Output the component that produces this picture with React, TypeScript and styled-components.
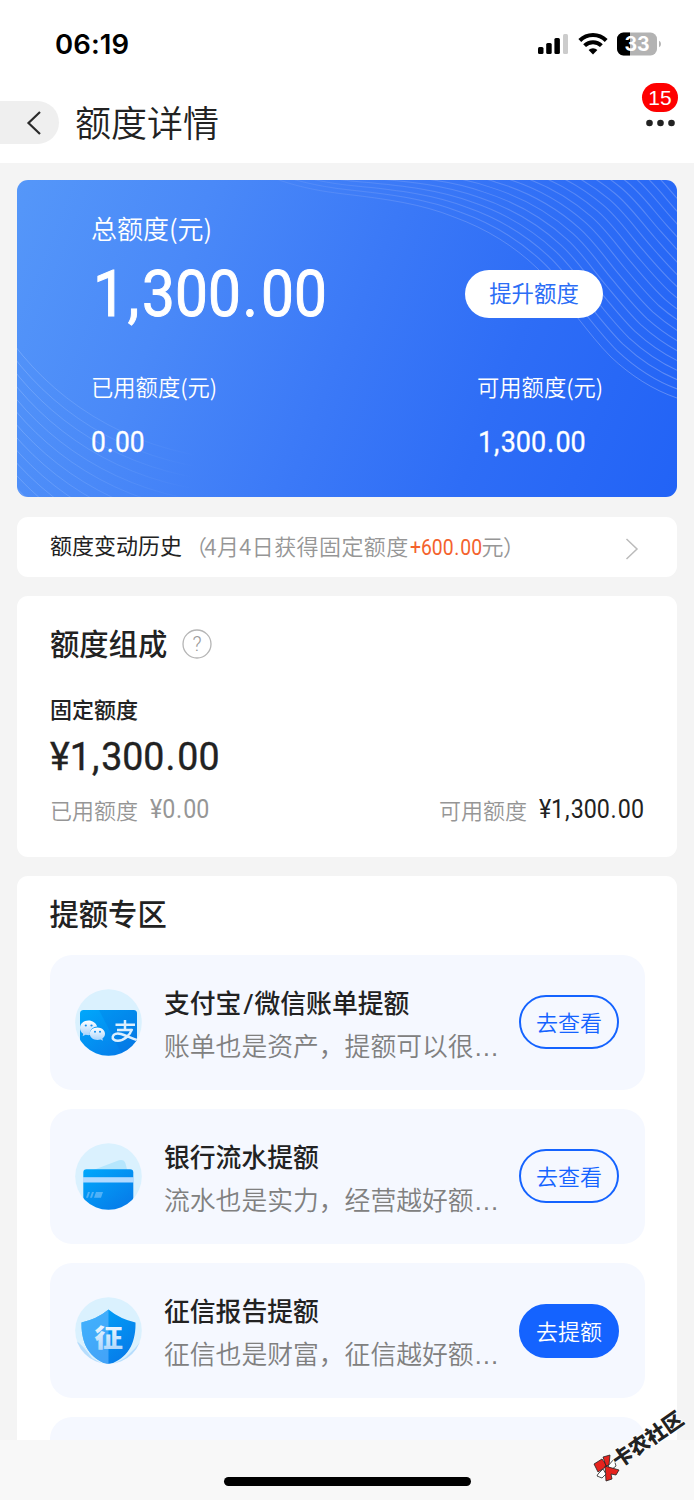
import React from 'react';
import styled, { createGlobalStyle } from 'styled-components';

const cjk = '"Noto Sans CJK SC", sans-serif';

const GlobalStyle = createGlobalStyle`
  * { box-sizing: border-box; }
  body { margin: 0; background: #f4f4f4; font-family: ${cjk}; color: #222; }
`;

const Screen = styled.div`
  width: 694px;
  height: 1500px;
  position: relative;
  display: flex;
  flex-direction: column;
  overflow: hidden;
`;

const StatusBar = styled.div`
  height: 88px;
  flex: none;
  background: #fff;
  display: flex;
  align-items: center;
  justify-content: space-between;
  padding: 0 32px 0 55px;
`;

const Clock = styled.span`
  font: 600 27.5px/40px Inter, sans-serif;
  letter-spacing: 0.1px;
  color: #000;
`;

const StatusIcons = styled.div`
  display: flex;
  align-items: center;
`;

const Header = styled.header`
  height: 75px;
  flex: none;
  background: #fff;
  display: flex;
  align-items: flex-start;
  padding: 13px 16px 0 0;
`;

const BackButton = styled.button`
  width: 59px;
  height: 43px;
  border: 0;
  padding: 0 0 0 25px;
  background: #efefef;
  border-radius: 0 22px 22px 0;
  display: flex;
  align-items: center;
`;

const PageTitle = styled.h1`
  flex: 1;
  margin: -1px 0 0 16px;
  font-size: 36px;
  line-height: 42px;
  font-weight: 350;
`;

const MenuButton = styled.div`
  width: 36px;
  margin-top: -18px;
  display: flex;
  flex-direction: column;
  align-items: center;
  gap: 6.5px;
`;

const Badge = styled.span`
  width: 36px;
  height: 29px;
  border-radius: 15px;
  background: #fe0000;
  color: #fff;
  font: 400 21px/29px "Liberation Sans", sans-serif;
  text-align: center;
`;

const Content = styled.main`
  height: 1277px;
  flex: none;
  overflow: hidden;
  padding: 17px 17px 0;
  display: flex;
  flex-direction: column;
`;

const Hero = styled.section`
  position: relative;
  height: 317px;
  flex: none;
  border-radius: 11px;
  overflow: hidden;
  background: linear-gradient(112deg, #5597f9 0%, #4a89f8 25%, #3b79f7 50%, #2e6df6 72%, #2263f6 100%);
  color: #fff;
  padding: 30px 74px 0;
`;

const HeroLines = styled.svg`
  position: absolute;
  inset: 0;
`;

const HeroBody = styled.div`
  position: relative;
`;

const HeroLabel = styled.div<{ $size: number; $line: number }>`
  font-size: ${p => p.$size}px;
  line-height: ${p => p.$line}px;
  font-weight: 350;
  white-space: nowrap;
`;

const HeroMain = styled.div`
  display: flex;
  justify-content: space-between;
  align-items: center;
  height: 76px;
  margin-top: 10px;
`;

const RaiseButton = styled.button`
  width: 138px;
  height: 48px;
  padding: 0 0 5px;
  border: 0;
  border-radius: 24px;
  background: #fff;
  color: #2b6df6;
  font: 400 22.4px/42px ${cjk};
`;

const HeroFoot = styled.div`
  display: flex;
  justify-content: space-between;
  margin-top: 38px;
`;

const HeroStat = styled.div`
  width: 126px;
  display: flex;
  flex-direction: column;
  gap: 24px;
`;

const Figure = styled.span<{ $size: number; $weight?: number; $color?: string; $scale?: number; $line?: number; $right?: boolean; $indent?: number; $bolder?: number }>`
  display: inline-block;
  margin-left: ${p => p.$indent ?? 0}px;
  font-family: Roboto, sans-serif;
  font-size: ${p => p.$size}px;
  line-height: ${p => p.$line ?? p.$size + 4}px;
  font-weight: ${p => p.$weight ?? 400};
  color: ${p => p.$color ?? 'inherit'};
  -webkit-text-stroke: ${p => p.$bolder ?? 0}px currentColor;
  transform: scaleX(${p => p.$scale ?? 0.93});
  transform-origin: ${p => (p.$right ? 'right' : 'left')} center;
  white-space: nowrap;
`;

const Punct = styled.span`
  letter-spacing: 0.05em;
  margin-left: 0.03em;
`;

const Card = styled.section<{ $height: number; $top?: number; $inset?: number }>`
  height: ${p => p.$height}px;
  flex: none;
  margin-top: 19.5px;
  background: #fff;
  border-radius: 11px;
  padding: ${p => p.$top ?? 0}px ${p => p.$inset ?? 33}px 0;
`;

const HistoryRow = styled(Card)`
  display: flex;
  align-items: center;
  padding: 0 38px 0 33px;
`;

const HistoryTitle = styled.span`
  font-size: 22px;
  line-height: 32px;
  margin-top: -6px;
`;

const HistoryNote = styled.span`
  flex: 1;
  margin-top: -4px;
  font-size: 22px;
  line-height: 32px;
  font-weight: 350;
  letter-spacing: 0.4px;
  color: #969696;
  white-space: nowrap;
`;

const Paren = styled.span<{ $shift: number }>`
  margin-left: ${p => p.$shift}px;
  margin-right: ${p => -p.$shift}px;
`;

const GainSlot = styled.span`
  margin: 0 -10px 0 1px;
  letter-spacing: 0;
`;

const ChevronRight = styled.svg`
  margin-top: 4px;
`;

const SectionTitle = styled.h2`
  display: flex;
  align-items: center;
  gap: 15px;
  margin: 0;
  font-size: 29.3px;
  line-height: 42px;
  font-weight: 500;
`;

const HelpIcon = styled.svg`
  margin-top: 3px;
`;

const FixedLabel = styled.div`
  margin-top: 29px;
  font-size: 22px;
  line-height: 32px;
  font-weight: 500;
`;

const SplitRow = styled.div`
  display: flex;
  justify-content: space-between;
  align-items: center;
  margin-top: 4px;
`;

const Pair = styled.div<{ $gap: number }>`
  display: flex;
  align-items: center;
  font-size: 22px;
  line-height: 30px;
  font-weight: 350;
  color: #969696;
  gap: ${p => p.$gap}px;
`;

const OfferList = styled.div`
  display: flex;
  flex-direction: column;
  gap: 19.3px;
  margin-top: 21.5px;
`;

const Offer = styled.article`
  height: 135px;
  border-radius: 22px;
  background: #f5f8ff;
  display: flex;
  align-items: center;
  padding: 0 25.5px 0 25.5px;
`;

const OfferText = styled.div`
  flex: 1;
  margin-left: 22px;
  padding-top: 7px;
`;

const OfferTitle = styled.div`
  font: 500 25.8px/43px Roboto, ${cjk};
  white-space: nowrap;
`;

const Slash = styled.span`
  margin: 0 1px 0 2px;
`;

const OfferNote = styled.div`
  font: 350 25.8px/43px "Liberation Sans", ${cjk};
  color: #808080;
  white-space: nowrap;
`;

const OfferButton = styled.button<{ $filled?: boolean }>`
  width: 100px;
  height: 54px;
  border-radius: 27px;
  padding: 0 0 2px;
  border: 2px solid #1463ff;
  background: ${p => (p.$filled ? '#1463ff' : 'transparent')};
  color: ${p => (p.$filled ? '#fff' : '#1463ff')};
  font: 350 22px/46px ${cjk};
`;

const BottomBar = styled.footer`
  flex: 1;
  background: #f8f8f8;
  display: flex;
  justify-content: center;
  align-items: flex-start;
  padding-top: 37px;
`;

const HomeIndicator = styled.div`
  width: 247px;
  height: 9px;
  border-radius: 5px;
  background: #000;
`;

const Watermark = styled.svg`
  position: absolute;
  right: 0;
  bottom: 0;
`;

function Money({ value }: { value: string }) {
  return (
    <>
      {value.split(/([.,])/).map((part, i) => (/[.,]/.test(part) ? <Punct key={i}>{part}</Punct> : part))}
    </>
  );
}

function SignalIcon() {
  return (
    <svg width="31" height="22" viewBox="0 0 31 22">
      <rect x="0" y="14" width="5.5" height="7" rx="1.5" />
      <rect x="8.2" y="10" width="5.5" height="11" rx="1.5" />
      <rect x="16.4" y="5" width="5.5" height="16" rx="1.5" />
      <rect x="25" y="1" width="5" height="20" rx="1.5" fill="#ccc" />
    </svg>
  );
}

function WifiIcon() {
  return (
    <svg width="30" height="22" viewBox="0 0 30 22" style={{ marginLeft: 9 }}>
      <g fill="none" stroke="#000" strokeWidth="4">
        <path d="M1.8 7.5 A18.7 18.7 0 0 1 28.2 7.5" />
        <path d="M6.6 12.6 A12 12 0 0 1 23.4 12.6" />
      </g>
      <path d="M10.6 17 A6.3 6.3 0 0 1 19.4 17 L15 21.4 Z" />
    </svg>
  );
}

function BatteryIcon() {
  return (
    <svg width="45" height="24" viewBox="0 0 45 24" style={{ marginLeft: 9 }}>
      <rect x="0" y="0.5" width="40" height="23" rx="6.5" fill="#b3b3b3" />
      <path d="M13 0.5 H6.5 A6.5 6.5 0 0 0 0 7 V17 A6.5 6.5 0 0 0 6.5 23.5 H13 Z" />
      <path d="M42 8.8 Q44 9.5 44 12 Q44 14.5 42 15.2 Z" fill="#b3b3b3" />
      <text x="20" y="19" textAnchor="middle" fontFamily="Inter" fontWeight="700" fontSize="19.5" fill="#fff">33</text>
    </svg>
  );
}

function CardLines() {
  const upper = Array.from({ length: 19 }, (_, i) => i);
  const lower = Array.from({ length: 14 }, (_, i) => i);
  return (
    <HeroLines width="660" height="317" viewBox="0 0 660 317" fill="none">
      <defs>
        <linearGradient id="upper" gradientUnits="userSpaceOnUse" x1="270" y1="0" x2="700" y2="60">
          <stop offset="0" stopColor="#a9bdf5" stopOpacity="0.15" />
          <stop offset="0.5" stopColor="#a9bdf5" stopOpacity="0.33" />
          <stop offset="1" stopColor="#a9bdf5" stopOpacity="0.45" />
        </linearGradient>
        <linearGradient id="lower" gradientUnits="userSpaceOnUse" x1="0" y1="0" x2="180" y2="0">
          <stop offset="0" stopColor="#a9c9ff" stopOpacity="0.35" />
          <stop offset="1" stopColor="#a9c9ff" stopOpacity="0" />
        </linearGradient>
      </defs>
      {upper.map(i => (
        <path
          key={i}
          d="M200 -34 C245 0 285 9 327 14 C370 19 405 24 437 37 C470 49 497 66 520 88 C535 102 547 121 560 137 C572 152 582 165 594 177 C613 195 636 210 660 218 C690 228 720 233 760 237"
          transform={`matrix(1 ${-0.0091 * i} 0 1 ${6 * i} ${-i})`}
          stroke="url(#upper)"
        />
      ))}
      {lower.map(i => (
        <path
          key={i}
          d="M-20 140 C20 205 90 262 190 277"
          transform={`translate(${-i * 1.5} ${i * 11})`}
          stroke="url(#lower)"
        />
      ))}
    </HeroLines>
  );
}

function IconDisc({ id, children }: { id: string; children: React.ReactNode }) {
  return (
    <svg width="67" height="67" viewBox="0 0 67 67">
      <defs>
        <linearGradient id={`${id}-fill`} x1="0" y1="0" x2="0.8" y2="1">
          <stop offset="0" stopColor="#00a8fb" />
          <stop offset="1" stopColor="#0779e8" />
        </linearGradient>
        <linearGradient id={`${id}-pale`} x1="0" y1="0" x2="0" y2="1">
          <stop offset="0" stopColor="#fff" />
          <stop offset="1" stopColor="#a5d2fb" />
        </linearGradient>
        <clipPath id={`${id}-clip`}><circle cx="33.5" cy="33.5" r="33.3" /></clipPath>
      </defs>
      <circle cx="33.5" cy="33.5" r="33.3" fill="#daf1fe" />
      <g clipPath={`url(#${id}-clip)`}>{children}</g>
    </svg>
  );
}

function PayIcon() {
  return (
    <IconDisc id="pay">
      <rect x="5" y="21" width="57" height="50" rx="3.5" fill="url(#pay-fill)" />
      <path d="M24 21 H58.5 Q62 21 62 24.5 V67 H48 Z" fill="#0068d8" opacity="0.2" />
      <g fill="url(#pay-pale)">
        <path d="M13.5 31.5 C8.5 31.5 5 34.7 5 39 C5 41.5 6.2 43.5 8.2 44.8 L7.6 47.2 L10.5 45.8 C12 46.2 14 46.4 15 46.1 C14 41 18 37.6 22.2 37.5 C21 34 17.5 31.5 13.5 31.5 Z" />
        <path d="M22.5 38.5 C18 38.5 14.8 41.3 14.8 44.7 C14.8 48.2 18.2 50.9 22.5 50.9 C23.6 50.9 24.6 50.7 25.5 50.4 L28 51.7 L27.4 49.5 C29 48.4 30 46.7 30 44.7 C30 41.3 26.6 38.5 22.5 38.5 Z" />
      </g>
      <g fill="#0d8df0">
        <circle cx="10.8" cy="36.5" r="1.1" /><circle cx="16.5" cy="36.5" r="1.1" />
        <circle cx="20" cy="42.8" r="1" /><circle cx="25" cy="42.8" r="1" />
      </g>
      <g fill="none" stroke="#dceffe" strokeWidth="2.5">
        <path d="M40.5 35.8 H60 M42 41 H57.5 M50 31 V41" />
        <path d="M57 40 C55 46.5 49 51.7 43 51.7 C39 51.7 37.2 49.8 37.8 47.5 C38.5 44.8 42 44 46 45 C51 46.3 56 49.5 62 51" />
      </g>
    </IconDisc>
  );
}

function BankIcon() {
  return (
    <IconDisc id="bank">
      <path d="M17 27.5 L44 17.3 Q49 16 50.5 20.5 L52.5 28 Z" fill="#b5e6fd" />
      <path d="M8.3 29.5 Q8.3 26.3 11.5 26.3 H55 Q58.3 26.3 58.3 29.5 V70 H8.3 Z" fill="url(#bank-fill)" />
      <rect x="8" y="34.2" width="51" height="5.3" fill="#b2daff" />
      <path d="M13 49 H15 L13 54.8 H11 Z M17 49 H19 L17 54.8 H15 Z M21 49 H28 L26 54.8 H19 Z" fill="#6bbcf8" opacity="0.75" />
    </IconDisc>
  );
}

function CreditIcon() {
  return (
    <IconDisc id="credit">
      <path d="M0 43 Q8 48 17 61 L33 70 L50 61 Q60 52 67 43 V67 H0 Z" fill="#a6d4fc" opacity="0.7" />
      <path d="M33.5 12.5 Q45 22 60.5 25.5 C61 47 52 62 33.5 67.5 C15 62 6 47 6.5 25.5 Q22 22 33.5 12.5 Z" fill="url(#credit-fill)" />
      <path d="M33.5 12.5 V67.5 C15 62 6 47 6.5 25.5 Q22 22 33.5 12.5 Z" fill="#6db9ff" opacity="0.6" />
      <text transform="translate(33.5 49.7) scale(1.17 1)" textAnchor="middle" fontFamily="Noto Sans CJK SC" fontWeight="900" fontSize="24.5" fill="url(#credit-pale)">征</text>
    </IconDisc>
  );
}

const offers = [
  { icon: <PayIcon />, title: <>支付宝<Slash>/</Slash>微信账单提额</>, note: '账单也是资产，提额可以很…', action: '去查看', filled: false },
  { icon: <BankIcon />, title: '银行流水提额', note: '流水也是实力，经营越好额…', action: '去查看', filled: false },
  { icon: <CreditIcon />, title: '征信报告提额', note: '征信也是财富，征信越好额…', action: '去提额', filled: true },
];

export default function App() {
  return (
    <Screen>
      <GlobalStyle />
      <StatusBar>
        <Clock>06:19</Clock>
        <StatusIcons>
          <SignalIcon />
          <WifiIcon />
          <BatteryIcon />
        </StatusIcons>
      </StatusBar>
      <Header>
        <BackButton aria-label="返回">
          <svg width="17" height="26" viewBox="0 0 17 26" fill="none" stroke="#2a2a2a" strokeWidth="2.2">
            <path d="M15 2 L3.5 13 L15 24" />
          </svg>
        </BackButton>
        <PageTitle>额度详情</PageTitle>
        <MenuButton>
          <Badge>15</Badge>
          <svg width="30" height="8" viewBox="0 0 30 8" fill="#222">
            <circle cx="4.5" cy="4" r="3.3" /><circle cx="15.5" cy="4" r="3.3" /><circle cx="26.5" cy="4" r="3.3" />
          </svg>
        </MenuButton>
      </Header>
      <Content>
        <Hero>
          <CardLines />
          <HeroBody>
            <HeroLabel $size={26} $line={36}>总额度(元)</HeroLabel>
            <HeroMain>
              <Figure $size={64.5} $scale={0.908} $indent={2} $bolder={1}><Money value="1,300.00" /></Figure>
              <RaiseButton>提升额度</RaiseButton>
            </HeroMain>
            <HeroFoot>
              <HeroStat>
                <HeroLabel $size={22.3} $line={32}>已用额度(元)</HeroLabel>
                <Figure $size={29} $scale={0.91} $bolder={0.3}><Money value="0.00" /></Figure>
              </HeroStat>
              <HeroStat>
                <HeroLabel $size={22.3} $line={32}>可用额度(元)</HeroLabel>
                <Figure $size={29} $indent={1} $bolder={0.3}><Money value="1,300.00" /></Figure>
              </HeroStat>
            </HeroFoot>
          </HeroBody>
        </Hero>

        <HistoryRow $height={60}>
          <HistoryTitle>额度变动历史</HistoryTitle>
          <HistoryNote>
            <Paren $shift={3}>（</Paren>4月4日获得固定额度<GainSlot><Figure $size={22} $color="#f4622d" $scale={0.88}><Money value="+600.00" /></Figure></GainSlot>元<Paren $shift={-1}>）</Paren>
          </HistoryNote>
          <ChevronRight width="14" height="22" viewBox="0 0 14 22" fill="none" stroke="#bbb" strokeWidth="1.5">
            <path d="M1.5 1 L12 11 L1.5 21" />
          </ChevronRight>
        </HistoryRow>

        <Card $height={260.500} $top={25}>
          <SectionTitle>
            额度组成
            <HelpIcon width="30" height="30" viewBox="0 0 30 30">
              <circle cx="15" cy="15" r="14" fill="none" stroke="#b5b5b5" strokeWidth="1.3" />
              <text x="15" y="22" textAnchor="middle" fontFamily="Roboto" fontWeight="300" fontSize="20" fill="#999">?</text>
            </HelpIcon>
          </SectionTitle>
          <FixedLabel>固定额度</FixedLabel>
          <Figure $size={39.5} $line={66} $scale={0.95} $bolder={0.4}><Money value="¥1,300.00" /></Figure>
          <SplitRow>
            <Pair $gap={12}>已用额度<Figure $size={25}><Money value="¥0.00" /></Figure></Pair>
            <Pair $gap={4}>可用额度<Figure $size={25} $color="#222" $right><Money value="¥1,300.00" /></Figure></Pair>
          </SplitRow>
        </Card>

        <Card $height={700} $top={15} $inset={32.5}>
          <SectionTitle>提额专区</SectionTitle>
          <OfferList>
            {offers.map((o, i) => (
              <Offer key={i}>
                {o.icon}
                <OfferText>
                  <OfferTitle>{o.title}</OfferTitle>
                  <OfferNote>{o.note}</OfferNote>
                </OfferText>
                <OfferButton $filled={o.filled}>{o.action}</OfferButton>
              </Offer>
            ))}
            <Offer />
          </OfferList>
        </Card>
      </Content>
      <BottomBar><HomeIndicator /></BottomBar>
      <Watermark width="110" height="100" viewBox="584 1400 110 100">
        <g stroke="#222" strokeWidth="0.8">
          <path d="M594 1464 L602 1459 L607 1466 L598 1472 Z" fill="#e5231d" />
          <path d="M603 1457 L610 1455 L609 1465 L606 1466 Z" fill="#e5231d" />
          <path d="M608 1466 L614 1459 L616 1466 L611 1470 Z" fill="#fff" />
          <path d="M605 1466 L619 1470 L616 1475 L611 1474 L612 1479 L606 1481 Z" fill="#e5231d" />
          <path d="M598 1474 L603 1469 L606 1474 L602 1478 L597 1476 Z" fill="#fff" />
        </g>
        <text
          transform="translate(622.5 1456) rotate(-34.5)"
          x="-10.5" y="8" fontFamily="Noto Sans CJK SC" fontWeight="900" fontSize="20.3"
          fill="#222" stroke="#fff" strokeWidth="1.5" paintOrder="stroke"
        >卡农社区</text>
      </Watermark>
    </Screen>
  );
}
